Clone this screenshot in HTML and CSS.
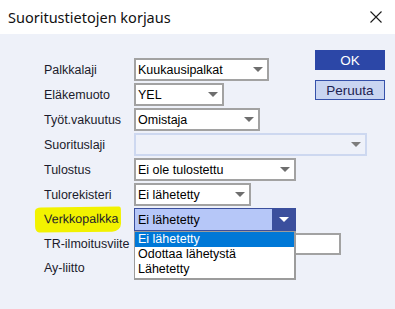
FILE: index.html
```html
<!DOCTYPE html>
<html lang="fi">
<head>
<meta charset="utf-8">
<title>Suoritustietojen korjaus</title>
<link rel="stylesheet" href="styles.css">
</head>
<body>
<div class="window">
  <div class="titlebar">
    <span class="title">Suoritustietojen korjaus</span>
    <svg class="close" width="12" height="12" viewBox="0 0 12 12"><path d="M0.5 0.5 L11.5 11.5 M11.5 0.5 L0.5 11.5" stroke="#1a1a1a" stroke-width="1.1" fill="none"/></svg>
  </div>
  <div class="content">
    <div class="buttons">
      <div class="btn ok">OK</div>
      <div class="btn cancel">Peruuta</div>
    </div>
    <div class="form">
      <div class="row">
        <span class="label">Palkkalaji</span>
        <div class="select w-palkka"><span class="value">Kuukausipalkat</span><span class="arrow"></span></div>
      </div>
      <div class="row">
        <span class="label">Eläkemuoto</span>
        <div class="select w-elake"><span class="value">YEL</span><span class="arrow"></span></div>
      </div>
      <div class="row">
        <span class="label">Työt.vakuutus</span>
        <div class="select w-tyot"><span class="value">Omistaja</span><span class="arrow"></span></div>
      </div>
      <div class="row">
        <span class="label">Suorituslaji</span>
        <div class="select disabled w-suor"><span class="value"></span><span class="arrow"></span></div>
      </div>
      <div class="row">
        <span class="label">Tulostus</span>
        <div class="select w-tulostus"><span class="value">Ei ole tulostettu</span><span class="arrow"></span></div>
      </div>
      <div class="row">
        <span class="label">Tulorekisteri</span>
        <div class="select w-tulorek"><span class="value">Ei lähetetty</span><span class="arrow"></span></div>
      </div>
      <div class="row open">
        <span class="label"><span class="mark">Verkkopalkka</span></span>
        <div class="select active w-verkko"><span class="value">Ei lähetetty</span><span class="arrowbox"><span class="arrow white"></span></span></div>
        <ul class="dropdown">
          <li class="selected">Ei lähetetty</li>
          <li>Odottaa lähetystä</li>
          <li>Lähetetty</li>
        </ul>
      </div>
      <div class="row input-row">
        <span class="label">TR-ilmoitusviite</span>
        <div class="input w-tr"></div>
      </div>
      <div class="row input-row">
        <span class="label">Ay-liitto</span>
        <div class="input w-ay"></div>
      </div>
    </div>
  </div>
</div>
</body>
</html>
```

FILE: styles.css
```css
* { box-sizing: border-box; }
html, body {
  margin: 0;
  padding: 0;
  width: 395px;
  height: 309px;
  overflow: hidden;
  background: #eef1f9;
}
.window {
  width: 395px;
  height: 309px;
  font-family: "Liberation Sans", Arial, sans-serif;
  font-size: 12.5px;
  color: #1b1b2b;
}
.titlebar {
  height: 34px;
  background: #ffffff;
  display: flex;
  align-items: center;
  justify-content: space-between;
  padding: 0 13px 0 8px;
}
.title {
  font-family: "Noto Sans", "Open Sans", sans-serif;
  font-size: 14.5px;
  color: #111;
  margin-top: -1px;
}
.close { display: block; margin-top: -1px; }
.content {
  padding: 16px 10px 0 44px;
  height: 275px;
  background: #eef1f9;
}
.buttons {
  float: right;
  display: flex;
  flex-direction: column;
  gap: 10px;
  width: 70px;
}
.btn {
  height: 20px;
  display: flex;
  align-items: center;
  justify-content: center;
  font-size: 13.5px;
}
.btn.ok {
  background: #2c47a7;
  color: #ffffff;
}
.btn.cancel {
  background: #c9d5f1;
  border: 1px solid #3551aa;
  color: #1d2250;
}
.form {
  padding-top: 8px;
}
.row {
  display: flex;
  align-items: center;
  height: 23px;
  margin-bottom: 2px;
  position: relative;
}
.label {
  width: 90px;
  flex: none;
  white-space: nowrap;
}
.mark {
  display: inline-block;
  background: #f2f200;
  margin-left: -9px;
  padding: 5px 3px 6px 9px;
  border-radius: 6px 2px 9px 4px / 4px 3px 8px 6px;
  transform: rotate(-0.6deg);
}
.select {
  height: 23px;
  border: 2px solid #a2a2a2;
  background: #ffffff;
  display: flex;
  align-items: center;
  color: #000;
  flex: none;
}
.select .value {
  flex: 1;
  padding-left: 2px;
  white-space: nowrap;
  overflow: hidden;
}
.arrow {
  width: 0;
  height: 0;
  border-left: 5px solid transparent;
  border-right: 5px solid transparent;
  border-top: 5px solid #6e6e6e;
  margin-right: 4px;
  flex: none;
}
.select.disabled {
  background: #eef1f9;
  border-color: #cdd8f0;
}
.select.disabled .arrow { border-top-color: #7c7c7c; }
.select.active {
  background: #b6c7f8;
  border: 1px solid #3b4f9d;
  padding-left: 1px;
}
.arrowbox {
  align-self: stretch;
  width: 23px;
  background: #3b4f9d;
  display: flex;
  align-items: center;
  justify-content: center;
  flex: none;
}
.arrow.white {
  border-top-color: #ffffff;
  margin: 0;
}
.w-palkka { width: 135px; }
.w-elake { width: 90px; }
.w-tyot { width: 126px; }
.w-suor { width: 233px; }
.w-tulostus { width: 162px; }
.w-tulorek { width: 117px; }
.w-verkko { width: 162px; }
.input-row { margin-top: 2px; margin-bottom: 1px; height: 22px; }
.input {
  height: 22px;
  border: 2px solid #a2a2a2;
  background: #ffffff;
  flex: none;
}
.w-tr { width: 207px; }
.w-ay { width: 45px; }
.dropdown {
  position: absolute;
  left: 90px;
  top: 23px;
  width: 162px;
  margin: 0;
  padding: 0 0 1px 0;
  list-style: none;
  background: #ffffff;
  border: 1px solid #9c9c9c;
  border-right-width: 2px;
  border-bottom-width: 2px;
  z-index: 2;
  color: #000;
}
.dropdown li {
  height: 15px;
  line-height: 15px;
  padding-left: 3px;
  white-space: nowrap;
}
.dropdown li.selected {
  background: #0078d7;
  color: #ffffff;
}
```
